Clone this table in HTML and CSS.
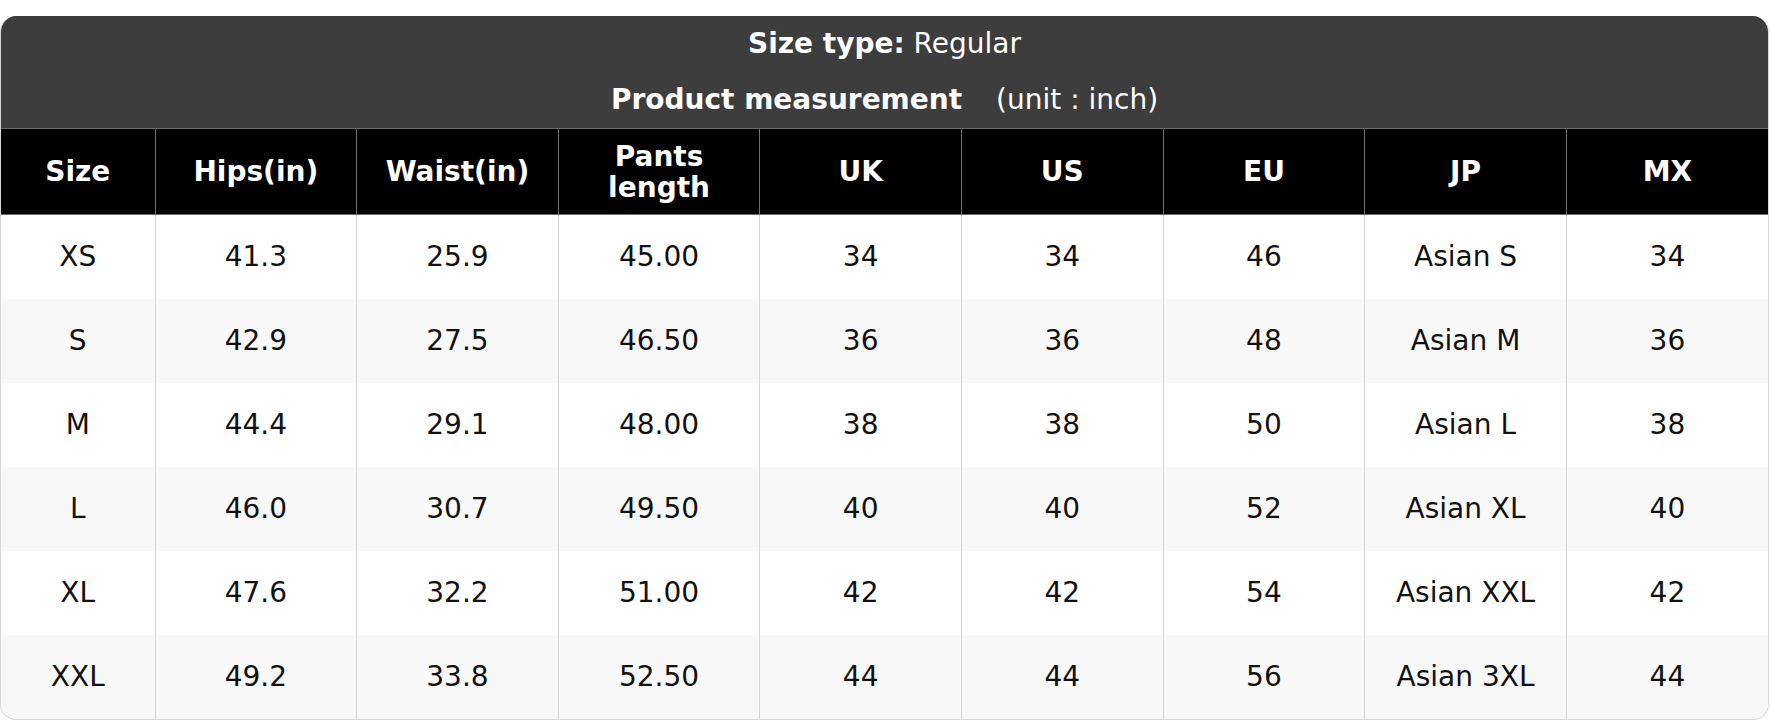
FILE: index.html
```html
<!DOCTYPE html>
<html>
<head>
<meta charset="utf-8">
<link rel="stylesheet" href="styles.css">
</head>
<body>
<div class="card">
  <div class="title">
    <div class="line"><b>Size type:</b> Regular</div>
    <div class="line"><b>Product measurement</b><span class="unit">(unit : inch)</span></div>
  </div>
  <table class="chart">
    <colgroup>
      <col class="c-size"><col><col><col><col><col><col><col><col>
    </colgroup>
    <thead>
      <tr><th>Size</th><th>Hips(in)</th><th>Waist(in)</th><th>Pants<br>length</th><th>UK</th><th>US</th><th>EU</th><th>JP</th><th>MX</th></tr>
    </thead>
    <tbody>
      <tr><td>XS</td><td>41.3</td><td>25.9</td><td>45.00</td><td>34</td><td>34</td><td>46</td><td>Asian S</td><td>34</td></tr>
      <tr><td>S</td><td>42.9</td><td>27.5</td><td>46.50</td><td>36</td><td>36</td><td>48</td><td>Asian M</td><td>36</td></tr>
      <tr><td>M</td><td>44.4</td><td>29.1</td><td>48.00</td><td>38</td><td>38</td><td>50</td><td>Asian L</td><td>38</td></tr>
      <tr><td>L</td><td>46.0</td><td>30.7</td><td>49.50</td><td>40</td><td>40</td><td>52</td><td>Asian XL</td><td>40</td></tr>
      <tr><td>XL</td><td>47.6</td><td>32.2</td><td>51.00</td><td>42</td><td>42</td><td>54</td><td>Asian XXL</td><td>42</td></tr>
      <tr><td>XXL</td><td>49.2</td><td>33.8</td><td>52.50</td><td>44</td><td>44</td><td>56</td><td>Asian 3XL</td><td>44</td></tr>
    </tbody>
  </table>
</div>
</body>
</html>
```
FILE: styles.css
```css
html, body {
  margin: 0;
  padding: 0;
  background: #ffffff;
}
body {
  padding-top: 16px;
  font-family: "DejaVu Sans", "Liberation Sans", sans-serif;
  font-size: 28px;
  color: #111;
}
.card {
  width: 1769px;
  box-sizing: border-box;
  border: 1px solid #d6d6d6;
  border-top: none;
  border-radius: 16px;
  overflow: hidden;
  background: #fff;
}
.title {
  background: #3d3d3d;
  color: #fff;
  text-align: center;
  height: 112px;
  box-sizing: border-box;
  padding-top: 8px;
  display: flex;
  flex-direction: column;
  gap: 16px;
}
.title .line {
  height: 40px;
  line-height: 40px;
}
.title .unit {
  margin-left: 34px;
}
.chart {
  width: 100%;
  border-collapse: collapse;
  table-layout: fixed;
}
.c-size {
  width: 154px;
}
.chart th {
  background: #000;
  color: #fff;
  font-weight: bold;
  height: 85px;
  padding: 0;
  line-height: 31px;
  border: 1px solid #707070;
  border-top: 1px solid #6a6a6a;
}
.chart td {
  height: 84px;
  padding: 0 0 1px;
  box-sizing: border-box;
  text-align: center;
  border-left: 1px solid #d6d6d6;
  border-right: 1px solid #d6d6d6;
}
.chart th:first-child,
.chart td:first-child {
  border-left: none;
}
.chart th:last-child,
.chart td:last-child {
  border-right: none;
}
.chart tbody tr:nth-child(even) td {
  background: #f8f8f8;
}
```
